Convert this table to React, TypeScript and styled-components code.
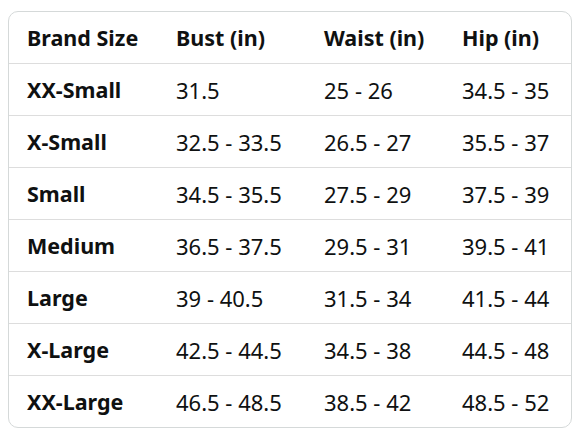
import styled, { createGlobalStyle } from "styled-components"

const GlobalStyle = createGlobalStyle`
  html, body {
    margin: 0;
    padding: 0;
    background: #ffffff;
  }
  body {
    font-family: "Noto Sans", "Liberation Sans", sans-serif;
    color: #0f1111;
  }
`

const sizes = [
    { size: "XX-Small", bust: "31.5", waist: "25 - 26", hip: "34.5 - 35" },
    { size: "X-Small", bust: "32.5 - 33.5", waist: "26.5 - 27", hip: "35.5 - 37" },
    { size: "Small", bust: "34.5 - 35.5", waist: "27.5 - 29", hip: "37.5 - 39" },
    { size: "Medium", bust: "36.5 - 37.5", waist: "29.5 - 31", hip: "39.5 - 41" },
    { size: "Large", bust: "39 - 40.5", waist: "31.5 - 34", hip: "41.5 - 44" },
    { size: "X-Large", bust: "42.5 - 44.5", waist: "34.5 - 38", hip: "44.5 - 48" },
    { size: "XX-Large", bust: "46.5 - 48.5", waist: "38.5 - 42", hip: "48.5 - 52" },
]

// 사이즈 표
const App = () => {
    return (
        <StyledPage>
            <GlobalStyle />
            <StyledTableBox>
                <StyledTable>
                    <colgroup>
                        <col style={{ width: 148 }} />
                        <col style={{ width: 148 }} />
                        <col style={{ width: 138 }} />
                        <col />
                    </colgroup>
                    <thead>
                        <tr>
                            <StyledHeadCell $first>Brand Size</StyledHeadCell>
                            <StyledHeadCell>Bust (in)</StyledHeadCell>
                            <StyledHeadCell>Waist (in)</StyledHeadCell>
                            <StyledHeadCell>Hip (in)</StyledHeadCell>
                        </tr>
                    </thead>
                    <tbody>
                        {sizes.map((row) => (
                            <tr key={row.size}>
                                <StyledCell $bold $first>{row.size}</StyledCell>
                                <StyledCell>{row.bust}</StyledCell>
                                <StyledCell>{row.waist}</StyledCell>
                                <StyledCell>{row.hip}</StyledCell>
                            </tr>
                        ))}
                    </tbody>
                </StyledTable>
            </StyledTableBox>
        </StyledPage>
    )
}

export default App

const StyledPage = styled.div`
  width: 588px;
  height: 441px;
  padding: 11px 0 0 8px;
  box-sizing: border-box;
`

const StyledTableBox = styled.div`
  width: 564px;
  border: 1px solid #d5d9d9;
  border-radius: 10px;
  overflow: hidden;
  box-sizing: border-box;
`

const StyledTable = styled.table`
  width: 100%;
  border-collapse: separate;
  border-spacing: 0;
  table-layout: fixed;

  tbody tr:last-child td {
    border-bottom: none;
  }
`

const StyledHeadCell = styled.th<{ $first?: boolean }>`
  height: 51px;
  padding: 0 0 0 ${({ $first }) => ($first ? 18 : 19)}px;
  text-align: left;
  font-size: 21.5px;
  font-weight: 700;
  border-bottom: 1px solid #dddddd;
  white-space: nowrap;
`

const StyledCell = styled.td<{ $bold?: boolean; $first?: boolean }>`
  height: 51px;
  padding: 0 0 0 ${({ $first }) => ($first ? 18 : 19)}px;
  font-size: ${({ $bold }) => ($bold ? 21.5 : 22)}px;
  font-weight: ${({ $bold }) => ($bold ? 700 : 400)};
  border-bottom: 1px solid #dddddd;
  white-space: nowrap;
`
